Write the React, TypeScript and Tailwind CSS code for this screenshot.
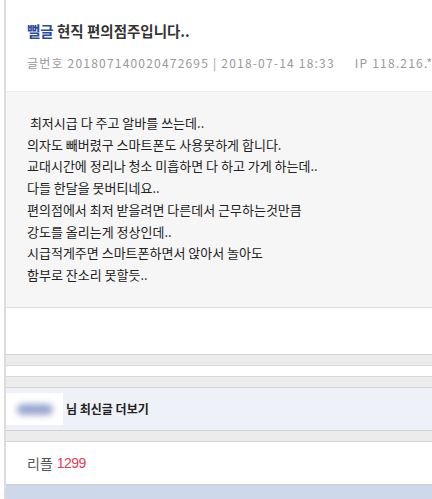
import React from "react";

const kr = { fontFamily: '"Noto Sans CJK KR", "Noto Sans", sans-serif' };

const lines = [
  "\u00a0최저시급 다 주고 알바를 쓰는데..",
  "의자도 빼버렸구 스마트폰도 사용못하게 합니다.",
  "교대시간에 정리나 청소 미흡하면 다 하고 가게 하는데..",
  "다들 한달을 못버티네요..",
  "편의점에서 최저 받을려면 다른데서 근무하는것만큼",
  "강도를 올리는게 정상인데..",
  "시급적게주면 스마트폰하면서 앉아서 놀아도",
  "함부로 잔소리 못할듯..",
];

export default function App() {
  return (
    <div className="w-[432px] h-[499px] overflow-hidden bg-white" style={kr}>
      <div className="ml-[4px] border-l-2 border-[#dcdcdc] flex flex-col">
        {/* post */}
        <div className="h-[355px] border-b border-[#d4d4d4] flex flex-col">
          <div className="pl-[21px] pt-[20px] h-[52px] text-[14.5px] font-bold text-[#333] leading-[22px] whitespace-nowrap">
            <span className="text-[#2b4c9b]">뻘글</span> 현직 편의점주입니다..
          </div>
          <div className="pl-[21px] h-[22px] text-[12px] text-[#999] leading-[22px] tracking-[1.2px] whitespace-nowrap flex">
            <span>글번호 201807140020472695 | 2018-07-14 18:33</span>
            <span className="ml-[20px]">IP 118.216.*</span>
          </div>
          <div className="mt-[17px] h-[217px] bg-[#f6f6f6] border-t border-[#ececec] border-b border-b-[#dedede] pl-[21px] pt-[20px] text-[13px] text-[#222] leading-[21.7px]">
            {lines.map((l, i) => (
              <div key={i} className="whitespace-nowrap">
                {l}
              </div>
            ))}
          </div>
        </div>
        <div className="h-[10px] bg-[#ececec]" />
        <div className="h-[12px] bg-white border-y border-[#d8d8d8]" />
        <div className="h-[10px] bg-[#ececec]" />
        {/* more posts */}
        <div className="h-[44px] bg-[#eef1f8] border-y border-[#d4d4d4] flex items-center">
          <div className="w-[57px] h-[32px] bg-white flex items-center justify-center">
            <div className="w-[36px] h-[11px] rounded-full bg-[#98a7d0] blur-[3px]" />
          </div>
          <span className="ml-[3px] text-[12px] font-bold text-[#222]">님 최신글 더보기</span>
        </div>
        <div className="h-[10px] bg-[#ececec]" />
        {/* reply count */}
        <div className="h-[43px] bg-white border-t border-[#d4d4d4] flex items-center pl-[21px] text-[14px]">
          <span className="text-[#555]">리플</span>
          <span className="ml-[4px] text-[#e0405a] tracking-[-0.5px]" style={{ fontFamily: '"Liberation Sans", sans-serif' }}>
            1299
          </span>
        </div>
        <div className="h-[20px] bg-[#cfd8ea] border-t border-[#c4cde0]" />
      </div>
    </div>
  );
}
